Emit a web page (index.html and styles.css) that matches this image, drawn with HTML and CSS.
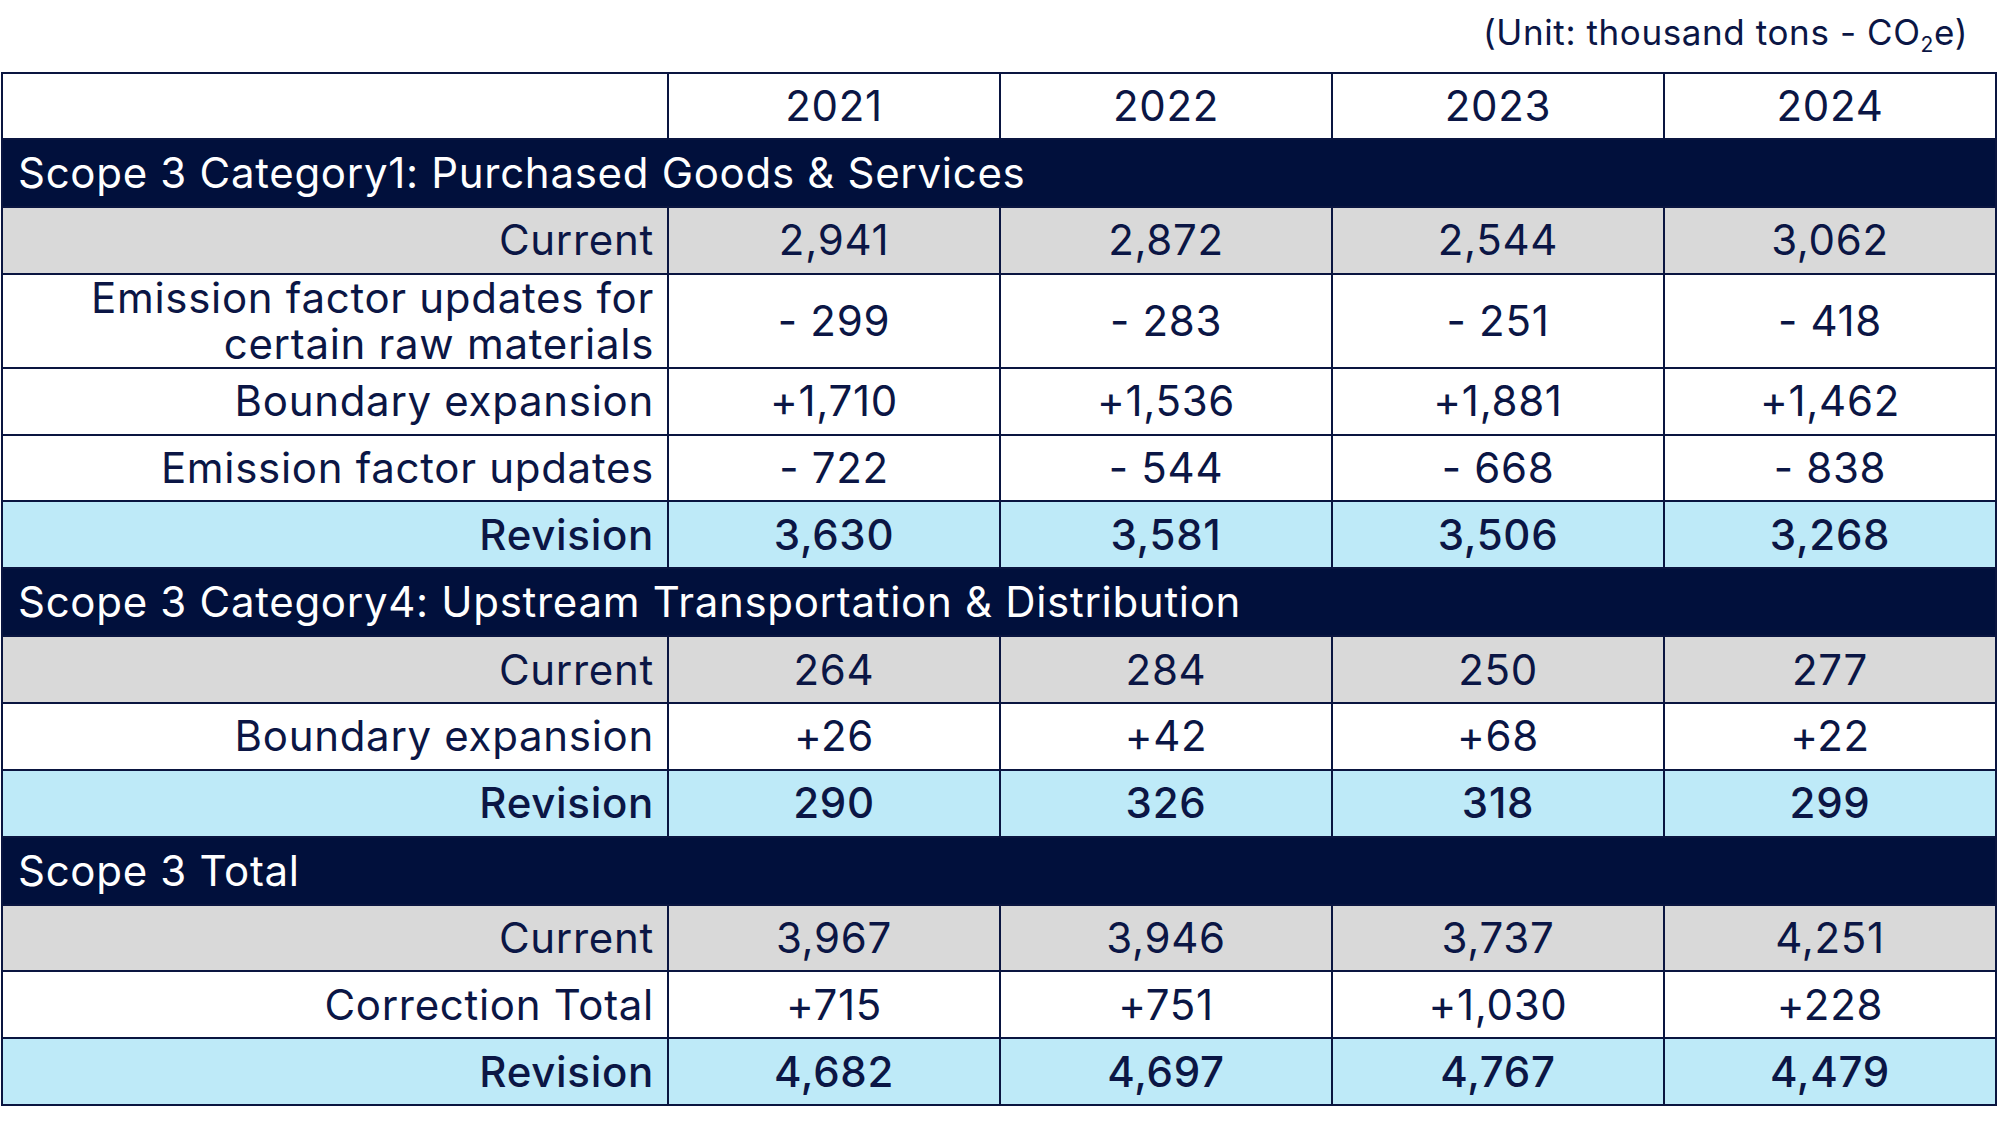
FILE: index.html
```html
<!DOCTYPE html>
<html>
<head>
<meta charset="utf-8">
<link rel="stylesheet" href="styles.css">
</head>
<body>
<div class="unit">(Unit: thousand tons - CO<sub>2</sub>e)</div>
<table class="data">
  <colgroup>
    <col class="c-label">
    <col class="c-year">
    <col class="c-year">
    <col class="c-year">
    <col class="c-year">
  </colgroup>
  <tr class="r-head">
    <td></td><td>2021</td><td>2022</td><td>2023</td><td>2024</td>
  </tr>
  <tr class="r-section"><td colspan="5">Scope 3 Category1: Purchased Goods &amp; Services</td></tr>
  <tr class="r-current"><td class="lbl">Current</td><td>2,941</td><td>2,872</td><td>2,544</td><td>3,062</td></tr>
  <tr class="r-plain r-tall"><td class="lbl">Emission factor updates for<br>certain raw materials</td><td>- 299</td><td>- 283</td><td>- 251</td><td>- 418</td></tr>
  <tr class="r-plain"><td class="lbl">Boundary expansion</td><td>+1,710</td><td>+1,536</td><td>+1,881</td><td>+1,462</td></tr>
  <tr class="r-plain"><td class="lbl">Emission factor updates</td><td>- 722</td><td>- 544</td><td>- 668</td><td>- 838</td></tr>
  <tr class="r-rev"><td class="lbl">Revision</td><td>3,630</td><td>3,581</td><td>3,506</td><td>3,268</td></tr>
  <tr class="r-section"><td colspan="5">Scope 3 Category4: Upstream Transportation &amp; Distribution</td></tr>
  <tr class="r-current"><td class="lbl">Current</td><td>264</td><td>284</td><td>250</td><td>277</td></tr>
  <tr class="r-plain"><td class="lbl">Boundary expansion</td><td>+26</td><td>+42</td><td>+68</td><td>+22</td></tr>
  <tr class="r-rev"><td class="lbl">Revision</td><td>290</td><td>326</td><td>318</td><td>299</td></tr>
  <tr class="r-section"><td colspan="5">Scope 3 Total</td></tr>
  <tr class="r-current"><td class="lbl">Current</td><td>3,967</td><td>3,946</td><td>3,737</td><td>4,251</td></tr>
  <tr class="r-plain"><td class="lbl">Correction Total</td><td>+715</td><td>+751</td><td>+1,030</td><td>+228</td></tr>
  <tr class="r-rev"><td class="lbl">Revision</td><td>4,682</td><td>4,697</td><td>4,767</td><td>4,479</td></tr>
</table>
</body>
</html>
```
FILE: styles.css
```css
html, body {
  margin: 0;
  padding: 0;
  background: #ffffff;
}
body {
  font-family: Inter, Roboto, "Liberation Sans", sans-serif;
  color: #0b1645;
}
.unit {
  width: 1968px;
  text-align: right;
  font-size: 35px;
  letter-spacing: 0.6px;
  line-height: 40px;
  padding-top: 12px;
  height: 72px;
  box-sizing: border-box;
}
.unit sub {
  font-size: 21px;
  vertical-align: -7px;
  line-height: 0;
}
.data {
  border-collapse: collapse;
  width: 1996px;
  margin-left: 1px;
  table-layout: fixed;
  font-size: 42px;
  letter-spacing: 0.7px;
}
.c-label { width: 666px; }
.c-year { width: 332px; }
.data td {
  border: 2px solid #0a1540;
  padding: 0;
  height: 64.8px;
  text-align: center;
  line-height: 46px;
}
.data td.lbl {
  text-align: right;
  padding-right: 13px;
}
.r-tall td { height: 88.5px; }
.r-head td { background: #ffffff; height: 64px; }
.r-section td {
  background: #01103c;
  color: #ffffff;
  text-align: left;
  padding-left: 15px;
  height: 66px;
}
.r-current td { background: #d9d9d9; }
.r-plain td { background: #ffffff; }
.r-rev td {
  background: #beeaf8;
  font-weight: 500;
}
```
